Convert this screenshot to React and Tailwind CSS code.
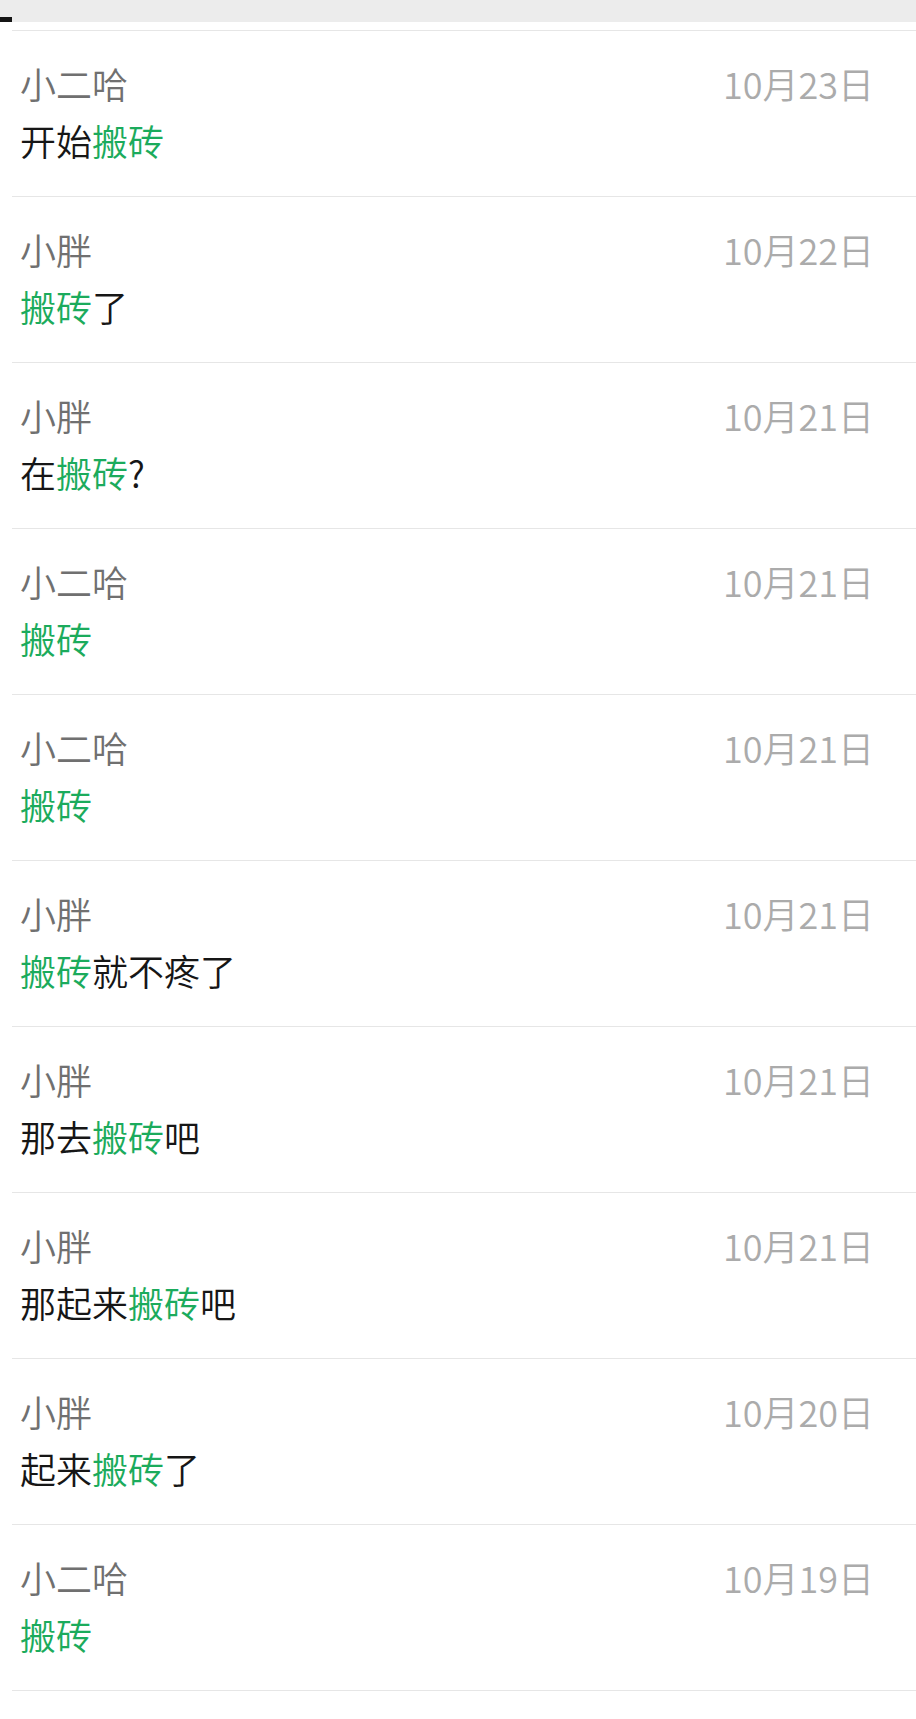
import React from 'react';

// search results: who said it, when, and the message with the keyword highlighted
const results = [
  { name: '小二哈', date: '10月23日', parts: ['开始', '搬砖', ''] },
  { name: '小胖', date: '10月22日', parts: ['', '搬砖', '了'] },
  { name: '小胖', date: '10月21日', parts: ['在', '搬砖', '?'] },
  { name: '小二哈', date: '10月21日', parts: ['', '搬砖', ''] },
  { name: '小二哈', date: '10月21日', parts: ['', '搬砖', ''] },
  { name: '小胖', date: '10月21日', parts: ['', '搬砖', '就不疼了'] },
  { name: '小胖', date: '10月21日', parts: ['那去', '搬砖', '吧'] },
  { name: '小胖', date: '10月21日', parts: ['那起来', '搬砖', '吧'] },
  { name: '小胖', date: '10月20日', parts: ['起来', '搬砖', '了'] },
  { name: '小二哈', date: '10月19日', parts: ['', '搬砖', ''] },
];

function ResultRow({ name, date, parts }) {
  const [before, keyword, after] = parts;
  return (
    <div className="ml-3 border-b border-[#e6e6e6] h-[166px] pl-2 pr-[42px] pt-[26px] font-[350]">
      <div className="flex justify-between items-center leading-[52px] text-[36px]">
        <span className="text-[#707070]">{name}</span>
        <span className="text-[#ababab]">{date}</span>
      </div>
      <p className="mt-[5px] leading-[52px] text-[36px] text-[#161616]">
        {before}
        <span className="text-[#1bab5c]">{keyword}</span>
        {after}
      </p>
    </div>
  );
}

export default function App() {
  return (
    <div
      className="w-[916px] h-[1719px] bg-white overflow-hidden"
      style={{ fontFamily: '"Noto Sans CJK SC", "Noto Sans", sans-serif' }}
    >
      {/* top bar */}
      <div className="h-[22px] bg-[#ececec] flex items-end">
        <div className="w-3 h-[5px] bg-[#151515]" />
      </div>
      <div className="h-2" />

      {/* results */}
      <div className="ml-3 border-b border-[#e6e6e6]" />
      {results.map((r, i) => (
        <ResultRow key={i} {...r} />
      ))}
    </div>
  );
}
